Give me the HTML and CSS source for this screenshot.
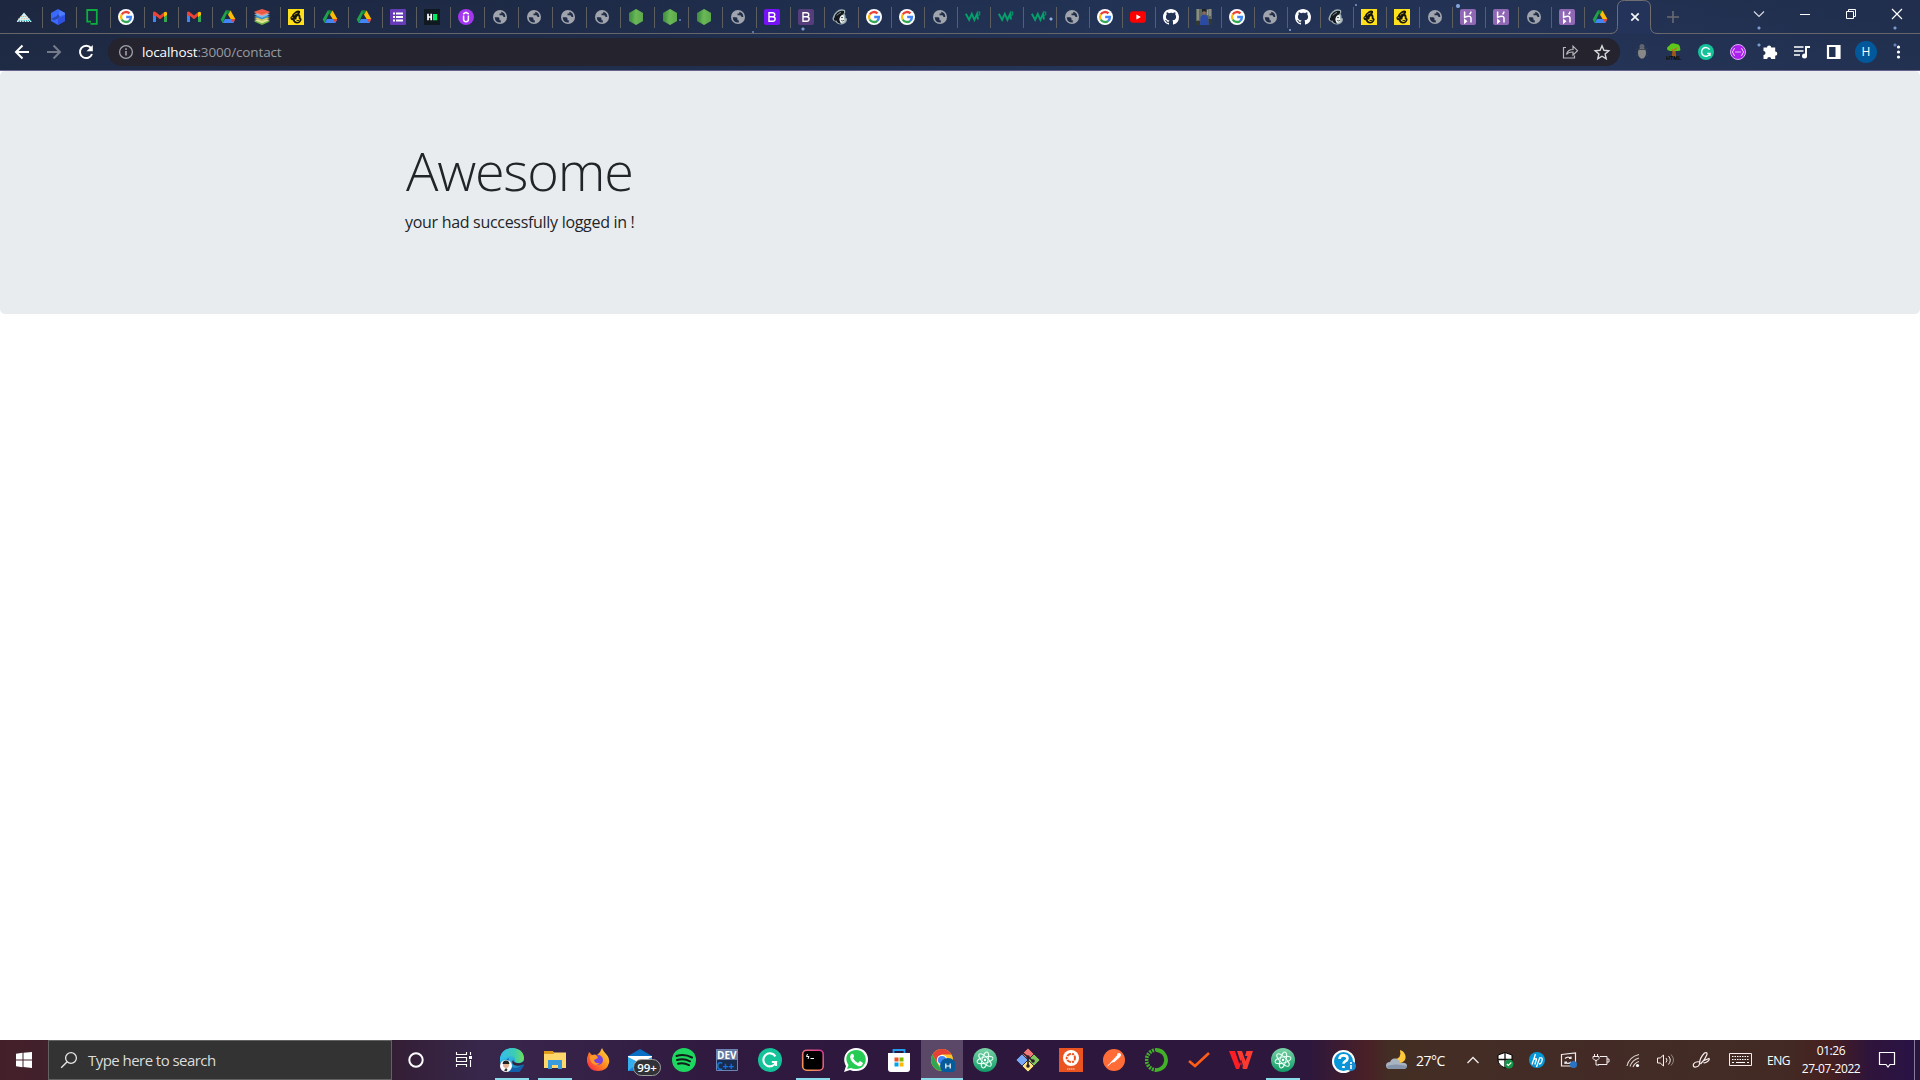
FILE: index.html
```html
<!DOCTYPE html>
<html lang="en">
<head>
<meta charset="utf-8">
<title>localhost:3000/contact</title>
<link rel="stylesheet" href="styles.css">
</head>
<body>
<svg class="defs" aria-hidden="true">
<defs>
<linearGradient id="edgeG" x1="0" y1="0" x2="1" y2="1"><stop offset="0" stop-color="#36c6f5"/><stop offset=".5" stop-color="#2fb0d8"/><stop offset="1" stop-color="#0c59a4"/></linearGradient>
<linearGradient id="edgeT" x1="0" y1="0" x2="1" y2="0"><stop offset="0" stop-color="#35bdf0"/><stop offset=".6" stop-color="#3ccbb4"/><stop offset="1" stop-color="#6ee05a"/></linearGradient>
<linearGradient id="foxG" x1="1" y1="0" x2="0" y2="1"><stop offset="0" stop-color="#ffe043"/><stop offset=".5" stop-color="#ff8a1e"/><stop offset="1" stop-color="#f5174f"/></linearGradient>
<linearGradient id="atomG" x1="0" y1="0" x2="0" y2="1"><stop offset="0" stop-color="#7bd3a6"/><stop offset="1" stop-color="#0f9b66"/></linearGradient>
<linearGradient id="nodeG" x1="0" y1="0" x2="1" y2="0"><stop offset="0" stop-color="#3f8b3f"/><stop offset=".5" stop-color="#66b856"/><stop offset="1" stop-color="#4a9a40"/></linearGradient>
<linearGradient id="hyG" x1="1" y1="0" x2="0" y2="1"><stop offset="0" stop-color="#d5369b"/><stop offset="1" stop-color="#f9a34b"/></linearGradient>
</defs>
<symbol id="peak" viewBox="0 0 16 16"><path d="M8 3.400 16 13H0z" fill="#d3f4f5"/><path d="M4.500 7.500h7" stroke="#eba766" stroke-width="1.200" stroke-dasharray="1.400 .8"/><path d="M2.500 9.700h11" stroke="#f0b988" stroke-width="1" stroke-dasharray="1.400 1.200"/><path d="M1 11.500h14" stroke="#2cbcc4" stroke-width="1.200" stroke-dasharray="1 1.200"/><path d="M0 12.600h16" stroke="#1d2943" stroke-dasharray="1 1.600"/></symbol>
<symbol id="hex" viewBox="0 0 16 16"><path d="m8 0 7 4v8l-7 4-7-4V4z" fill="#3b69fa"/><path d="M8 9.500 15 6v6l-7 4z" fill="#2f50e0"/><path d="M1 9.700 7 7V5.200L10.500 7 8 9.500 4 11.300z" fill="#2948b4"/><path d="M9.500 1.200 15 4v1L9 7.500z" fill="#4f7dff"/></symbol>
<symbol id="frame" viewBox="0 0 16 16"><path d="M7 12.700H3.200V1h9.600v2.500M6.500 14.900h6.300V3M3.200 12v1.500" fill="none" stroke="#0dad3e" stroke-width="1.800"/></symbol>
<symbol id="google" viewBox="0 0 16 16"><circle cx="8" cy="8" r="8" fill="#fff"/><g fill="none" stroke-width="2.300"><path d="M3.700 5.500A5 5 0 0 1 11.500 4.400" stroke="#ea4335"/><path d="M3.700 5.500a5 5 0 0 0 0 5" stroke="#fbbc05"/><path d="M3.700 10.500A5 5 0 0 0 11.300 11.800" stroke="#34a853"/><path d="M8.200 8H13a5 5 0 0 1-1.800 3.800" stroke="#4285f4"/></g></symbol>
<symbol id="gmail" viewBox="0 0 16 16"><path d="M1 4v9h3V7z" fill="#4285f4"/><path d="M15 4v9h-3V7z" fill="#34a853"/><path d="M1 3.600Q1.700 1.800 4 3.300L8 6.400l4-3.100V7l-4 3.200L4 7v1L1 5.800z" fill="#ea4335"/><path d="M12 3.300q2.500-1.500 3 .6v2L12 8z" fill="#fbbc04"/></symbol>
<symbol id="drive" viewBox="0 0 16 16"><path d="M5.700 1.400h2.600L4.500 10 2.500 14 .7 10.400z" fill="#1fa34a"/><path d="M5.700 1.400h4.800L8 6z" fill="#14883b"/><path d="M10.500 1.400 15.300 10h-4.700L8 5.800z" fill="#fbbc04"/><path d="M5 10h10.300l-2 4H2.600z" fill="#4285f4"/><path d="M15.300 10h-4.400l2.400 4z" fill="#ea4335"/></symbol>
<symbol id="layers" viewBox="0 0 16 16"><path d="m8 10.500 8 2L8 16l-8-3.500z" fill="#6fb545"/><path d="m8 9 8 2-8 3.300L0 11z" fill="#e4e59a"/><path d="m8 7 8 2-8 3.300L0 9z" fill="#d3c95b"/><path d="m8 5.300 8 2-8 3.200-8-3.200z" fill="#3b8fd0"/><path d="m8 3.700 8 1.800-8 3.200-8-3.200z" fill="#7cc0ea"/><path d="m8 1.800 8 1.900-8 3.200L0 3.700z" fill="#f59683"/><path d="m8 0 8 2.700-8 3-8-3z" fill="#ee5a48"/></symbol>
<symbol id="monkey" viewBox="0 0 16 16"><path d="M12 2Q10 .8 7.500 2.500 4.700 4.500 3.800 7q-2 1-1.200 3 .8 1.500 2.200 1.300Q6 14.500 9 14.500q3.600-.2 4.600-3.700.2-1.600-1-1.900.2-3-1.400-3.900Q12.500 3.800 12 2z" fill="#16150c"/><path d="M10 6.700q1.300 1 .7 3 1.500.2 1.300 1.200-1 2-3 2-2.400-.3-2.600-2.700 1.200.6 2-.3-.2-1.700 1.600-3.200z" fill="#ffe01b"/><path d="M6 6.300q1.500-2 3.600-2.300M3.700 8.500q1-.5 1.300.7" fill="none" stroke="#ffe01b" stroke-width=".7"/><path d="M8.500 11.300q1.500.7 3-.2" fill="none" stroke="#16150c" stroke-width=".9"/></symbol>
<symbol id="chimp" viewBox="0 0 16 16"><path d="M0 0h16v16H0z" fill="#ffe01b"/><use href="#monkey"/></symbol>
<symbol id="freddie" viewBox="0 0 16 16"><path d="M12.800 1Q8-.8 4.500 2.500 2 4.500 1.200 7.500q-1.500 2.200.2 4.300 1.500.9 2 .7Q5.500 16 10 15.500q4.700-1 5-5-.3-1.500-1.500-1.800.3-2.700-1-3.900Q14 3 12.800 1z" fill="#9fb0b5"/><path d="M12 2Q8.500.8 5.400 3.500 3 5.500 2.600 8.200q-1.200 1-.5 2.700.8 1.200 2.300.5Q6 14.700 9 14.700q-1.800-2.500-1.500-4.700.3-3.500 3.500-4.500 1.500-1.500 1-3.500z" fill="#14181c"/><path d="M11 5.800q1.700 1.300.9 3.900 1.600.2 1.500 1.400-1 2.800-3.900 2.900-2-1-2-3.500Q7.800 7 11 5.800z" fill="#eef2f2"/><path d="M9 8.800q1-1 2 0M9.200 11.500q1.500 1 3.400-.4" fill="none" stroke="#30363a" stroke-width=".8"/><path d="M5 6.500Q6.500 4 9 3.500" fill="none" stroke="#b9c8cb" stroke-width=".7"/></symbol>
<symbol id="forms" viewBox="0 0 16 16"><rect width="16" height="16" rx="1" fill="#673ab7"/><path d="M3 4.500h2M3 8h2M3 11.500h2M6 4.500h7M6 8h7M6 11.500h7" stroke="#fff" stroke-width="1.800"/></symbol>
<symbol id="hacker" viewBox="0 0 16 16"><path d="M0 0h16v16H0z" fill="#101820"/><path d="M4 4.800v6.400M7.200 4.800v6.400M4 8h3.200" stroke="#fff" stroke-width="1.700"/><path d="M9 5h4.200v6.300H9z" fill="#00ea64"/></symbol>
<symbol id="udemy" viewBox="0 0 16 16"><circle cx="8" cy="8" r="8" fill="#a435f0"/><path d="M5.600 6.500v3.800q0 2.400 2.400 2.400t2.400-2.400V6.500M5.200 5 8 3.300 10.800 5" fill="none" stroke="#fff" stroke-width="1.500"/></symbol>
<symbol id="globe" viewBox="0 0 16 16"><circle cx="8" cy="8" r="7" fill="#a0a4ad"/><path d="M2.700 8.300h3.500q1.300.2 1.300 1.500v1.400h1.300v2.300Q3.200 13.800 2.700 8.300zM9.300 2.800q4 .9 4 5.200h-2V7q-.5-.8-1.500-.8H7.500V4.500h1.800z" fill="#202d49"/></symbol>
<symbol id="node" viewBox="0 0 16 16"><path d="m8 0 7 4v8l-7 4-7-4V4z" fill="url(#nodeG)"/><path d="M8 0 5 12l3 4 7-4V4z" fill="#72b95b" opacity=".45"/></symbol>
<symbol id="boot" viewBox="0 0 16 16"><rect width="16" height="16" rx="2" fill="currentColor"/><path d="M5 3.700h3.500c3 0 3 3.800.2 4 3.400.2 3.200 4.500-.2 4.500H5zM5 7.700h3.700" fill="none" stroke="#fff" stroke-width="1.400"/></symbol>
<symbol id="w3" viewBox="0 0 16 16"><path d="m.8 4.800 3.300 6 2.700-6 2.600 6 2.700-6 .9 5.700" fill="none" stroke="#05a06b" stroke-width="1.900"/><path d="M12.800 3h2.400l-1.200 1.300q1.700.3.900 1.600-.9.700-2 0" fill="none" stroke="#05a06b" stroke-width=".9"/></symbol>
<symbol id="yt" viewBox="0 0 16 16"><rect y="2.300" width="16" height="11.400" rx="3" fill="#f00"/><path d="m6.400 5.400 4.500 2.600-4.500 2.600z" fill="#fff"/></symbol>
<symbol id="github" viewBox="0 0 16 16"><path fill="#fff" d="M8 0C3.580 0 0 3.580 0 8c0 3.540 2.290 6.530 5.470 7.590.4.070.55-.17.55-.38 0-.19-.01-.82-.01-1.490-2.010.37-2.530-.49-2.690-.94-.09-.23-.48-.94-.82-1.130-.28-.15-.68-.52-.01-.53.63-.01 1.080.58 1.230.82.72 1.210 1.870.87 2.330.66.070-.52.28-.87.51-1.070-1.780-.2-3.640-.89-3.640-3.950 0-.87.31-1.590.82-2.150-.08-.2-.36-1.020.08-2.120 0 0 .67-.21 2.200.82A7.400 7.400 0 0 1 8 3.870c.68 0 1.360.09 2 .26 1.530-1.040 2.200-.82 2.200-.82.44 1.100.16 1.920.08 2.120.51.56.82 1.270.82 2.150 0 3.070-1.870 3.750-3.650 3.950.29.25.54.73.54 1.480 0 1.070-.01 1.930-.01 2.200 0 .21.15.46.55.38A8.010 8.010 0 0 0 16 8c0-4.420-3.580-8-8-8z"/></symbol>
<symbol id="photo" viewBox="0 0 16 16"><path d="M0 0h16v16H0z" fill="#5e6961"/><path d="M2 0v11M14 0v7M11.800 1v5" stroke="#b7b5a5" stroke-width="1"/><path d="m4 16 .5-8L7 5.500h2.500L12 8l1 8z" fill="#2b4aa6"/><path d="M6 0h4.500v3H6z" fill="#1e2023"/><path d="M6.800 2.300h2.800v3.400H6.800z" fill="#8e6559"/><path d="M0 12h4v4H0zM12.500 10H16v6h-3z" fill="#34392f"/></symbol>
<symbol id="heroku" viewBox="0 0 16 16"><rect width="16" height="16" rx="2" fill="#8f67b5"/><path d="M4.600 2.600v5.600q6-2.300 6.400.6v4.700M11 2.600q0 1.500-1.400 2.800M4.800 11v2.600l1.500-1.300z" fill="none" stroke="#fff" stroke-width="1.500"/></symbol>
<symbol id="gram" viewBox="0 0 24 24"><circle cx="12" cy="12" r="12" fill="#15c39a"/><path d="M17.400 8.400A6.500 6.500 0 1 0 18 14h-4.200M18 18v-4.400" fill="none" stroke="#fff" stroke-width="2.100"/></symbol>
<symbol id="atom" viewBox="0 0 24 24"><circle cx="12" cy="12" r="12" fill="url(#atomG)"/><g fill="none" stroke="#e5fff3" stroke-width="1"><ellipse cx="12" cy="12" rx="3" ry="8.200" transform="rotate(15 12 12)"/><ellipse cx="12" cy="12" rx="3" ry="8.200" transform="rotate(75 12 12)"/><ellipse cx="12" cy="12" rx="3" ry="8.200" transform="rotate(135 12 12)"/></g><circle cx="12" cy="12" r="1.200" fill="#fff"/></symbol>
</svg>

<header class="browser">
<div class="tabs">
<span class="tab"><svg><use href="#peak"/></svg></span><span class="tab"><svg><use href="#hex"/></svg></span><span class="tab"><svg><use href="#frame"/></svg></span><span class="tab"><svg><use href="#google"/></svg></span><span class="tab"><svg><use href="#gmail"/></svg></span><span class="tab"><svg><use href="#gmail"/></svg></span><span class="tab"><svg><use href="#drive"/></svg></span><span class="tab"><svg><use href="#layers"/></svg></span><span class="tab"><svg><use href="#chimp"/></svg></span><span class="tab"><svg><use href="#drive"/></svg></span><span class="tab"><svg><use href="#drive"/></svg></span><span class="tab"><svg><use href="#forms"/></svg></span><span class="tab"><svg><use href="#hacker"/></svg></span><span class="tab"><svg><use href="#udemy"/></svg></span>
<span class="tab"><svg><use href="#globe"/></svg></span><span class="tab"><svg><use href="#globe"/></svg></span><span class="tab"><svg><use href="#globe"/></svg></span><span class="tab"><svg><use href="#globe"/></svg></span><span class="tab"><svg><use href="#node"/></svg></span><span class="tab"><svg><use href="#node"/></svg></span><span class="tab"><svg><use href="#node"/></svg></span><span class="tab"><svg><use href="#globe"/></svg></span><span class="tab"><svg class="violet"><use href="#boot"/></svg></span><span class="tab"><svg class="plum"><use href="#boot"/></svg></span><span class="tab"><svg><use href="#freddie"/></svg></span>
<span class="tab slim"><svg><use href="#google"/></svg></span><span class="tab slim"><svg><use href="#google"/></svg></span><span class="tab slim"><svg><use href="#globe"/></svg></span><span class="tab slim"><svg><use href="#w3"/></svg></span><span class="tab slim"><svg><use href="#w3"/></svg></span><span class="tab slim"><svg><use href="#w3"/></svg></span><span class="tab slim"><svg><use href="#globe"/></svg></span><span class="tab slim"><svg><use href="#google"/></svg></span><span class="tab slim"><svg><use href="#yt"/></svg></span><span class="tab slim"><svg><use href="#github"/></svg></span><span class="tab slim"><svg><use href="#photo"/></svg></span><span class="tab slim"><svg><use href="#google"/></svg></span><span class="tab slim"><svg><use href="#globe"/></svg></span><span class="tab slim"><svg><use href="#github"/></svg></span><span class="tab slim"><svg><use href="#freddie"/></svg></span><span class="tab slim"><svg><use href="#chimp"/></svg></span><span class="tab slim"><svg><use href="#chimp"/></svg></span><span class="tab slim"><svg><use href="#globe"/></svg></span><span class="tab slim"><svg><use href="#heroku"/></svg></span><span class="tab slim"><svg><use href="#heroku"/></svg></span><span class="tab slim"><svg><use href="#globe"/></svg></span><span class="tab slim"><svg><use href="#heroku"/></svg></span><span class="tab last"><svg><use href="#drive"/></svg></span>
<svg class="active" viewBox="0 0 50 34"><path d="M0 33.500q7.500 0 7.500-7V7q0-6.500 7-6.500h19q7 0 7 6.500v19.500q0 7 7 7V34H0z" fill="#23335a"/><path d="M0 33.500q7.500 0 7.500-7V7q0-6.500 7-6.500h19q7 0 7 6.500v19.500q0 7 7 7H50" fill="none" stroke="#716e70"/><path d="m21.300 13.300 7.400 7.400m0-7.400-7.400 7.400" stroke="#f2f4f8" stroke-width="1.700"/></svg>
<svg class="plus" viewBox="0 0 26 34"><path d="M13 11v12M7 17h12" stroke="#6b6b70" stroke-width="1.600"/></svg>
<div class="window">
<svg viewBox="0 0 46 34"><path d="m18 11.500 5 5 5-5" fill="none" stroke="#d7dae1" stroke-width="1.200"/></svg>
<svg viewBox="0 0 46 34"><path d="M18 14.500h10" stroke="#fff"/></svg>
<svg viewBox="0 0 46 34"><path d="M18.500 11.500h7v7h-7zM20.500 11V9.500h7v7H26" fill="none" stroke="#fff"/></svg>
<svg viewBox="0 0 46 34"><path d="m18 9 10 10m0-10L18 19" stroke="#fff" stroke-width="1.200"/></svg>
</div>
</div>
<div class="toolbar">
<svg viewBox="0 0 32 36"><path d="M23 18H10m6.500-6.500L10 18l6.500 6.500" fill="none" stroke="#fff" stroke-width="2"/></svg>
<svg viewBox="0 0 32 36"><path d="M9 18h13m-6.500-6.500L22 18l-6.500 6.500" fill="none" stroke="#747b8b" stroke-width="2"/></svg>
<svg viewBox="0 0 32 36"><path d="M21 14a6.200 6.200 0 1 0 1 6" fill="none" stroke="#fff" stroke-width="2"/><path d="M22.800 11v6.300h-6.300z" fill="#fff"/></svg>
<div class="address">
<svg class="info" viewBox="0 0 16 16"><circle cx="8" cy="8" r="6.400" fill="none" stroke="#a0a2a9" stroke-width="1.300"/><path d="M8 7v4.500M8 4.300V6" stroke="#a0a2a9" stroke-width="1.600"/></svg>
<span class="url"><b>localhost</b>:3000/contact</span>
<svg viewBox="0 0 32 28"><path d="M12 9.500H9.500v10.500h11V17.500M12.500 16.500q1-5 6.500-5V8.200l4.500 4.500-4.500 4.400V14q-4.500-.2-6.500 2.500z" fill="none" stroke="#b7b7bc" stroke-width="1.200"/></svg>
<svg viewBox="0 0 32 28"><path d="m16 7.800 1.900 4.500 4.900.4-3.700 3.200 1.100 4.800-4.200-2.500-4.200 2.500 1.100-4.800-3.700-3.200 4.900-.4z" fill="none" stroke="#d8d8dc" stroke-width="1.400"/></svg>
</div>
<div class="ext">
<svg viewBox="0 0 32 36"><path d="m10 14 12 8M9.500 18h13M10 22l12-8" stroke="#353e51"/><ellipse cx="16" cy="19" rx="4" ry="5.800" fill="#888"/><circle cx="16" cy="12.500" r="2.500" fill="#60646c"/><path d="M12.500 15.500h7" stroke="#464a53"/></svg>
<svg viewBox="0 0 32 36"><path d="M14.700 14h2.600l1 9h-4.600z" fill="#9d5818"/><path d="M9.500 16a3 3 0 0 1 1.500-4q2-4 7-2 4 0 4 4 1.500 3-2 3h-8z" fill="#5cc71a"/><path d="m16 18-2-3m2 1 3-2" stroke="#ba6d22" stroke-width="1.300"/><text x="8" y="25.500" class="html">HTML</text></svg>
<svg viewBox="0 0 32 36"><use href="#gram" x="8" y="10" width="16" height="16"/></svg>
<svg viewBox="0 0 32 36"><circle cx="16" cy="18" r="7.500" fill="#ab20ed" stroke="#e2adff"/><path d="M13 14.500q-1.500 0-1.500 1.500t-1.500 2q1.500.5 1.500 2t1.500 1.500m6-7q1.500 0 1.500 1.500t1.500 2q-1.500.5-1.500 2t-1.500 1.500M13 18h6" fill="none" stroke="#f3d5ff" stroke-width=".9"/></svg>
<svg viewBox="0 0 32 36"><path d="M9.500 13.500H13a2.100 2.100 0 1 1 4.200 0h4v4.100a2.100 2.100 0 1 1 0 4.200V25h-4a2 2 0 1 0-4 0H9.500v-4a2 2 0 1 0 0-4z" fill="#fff"/></svg>
<svg viewBox="0 0 32 36"><path d="M8 13h9.500M8 17h9.500M8 21h6" stroke="#fff" stroke-width="1.600"/><path d="M20 22v-9h4" fill="none" stroke="#fff" stroke-width="2"/><circle cx="18.500" cy="22" r="2.500" fill="#fff"/></svg>
<svg viewBox="0 0 32 36"><path d="M10 12h11.500v12H10z" fill="none" stroke="#fff" stroke-width="2.200"/><path d="M17.500 11H22v14h-4.500z" fill="#fff"/></svg>
<span class="avatar">H</span>
<svg viewBox="0 0 32 36"><g fill="#fff"><circle cx="16.500" cy="13" r="1.600"/><circle cx="16.500" cy="18" r="1.600"/><circle cx="16.500" cy="23" r="1.600"/></g></svg>
</div>
</div>
</header>

<main class="page">
<section class="jumbotron"><div class="container"><h1>Awesome</h1><p>your had successfully logged in !</p></div></section>
</main>

<footer class="taskbar">
<svg class="start" viewBox="0 0 48 40"><path d="m16 13.700 6.500-.9v6.700H16zm7.500-1L32 12v7.500h-8.500zM16 20.500h6.500v6.700l-6.500-.9zm7.500 0H32V28l-8.500-.9z" fill="#fff"/></svg>
<div class="search"><svg viewBox="0 0 18 18"><circle cx="11" cy="7" r="5.400" fill="none" stroke="#e6e6e6" stroke-width="1.300"/><path d="m7.200 10.800-6 6" stroke="#e6e6e6" stroke-width="1.400"/></svg><span>Type here to search</span></div>
<svg class="start" viewBox="0 0 48 40"><circle cx="24" cy="20" r="6.700" fill="none" stroke="#fff" stroke-width="2"/></svg>
<svg class="start" viewBox="0 0 48 40"><path d="M16.500 12v2.500h10V12M16.500 27v-2.500h10V27M16.500 17.500h10v4h-10zM30.500 12v3M30.500 20v7" fill="none" stroke="#fff" stroke-width="1.100"/><path d="M29 16h3v3h-3z" fill="#fff"/></svg>
<div class="apps">
<span class="app open"><svg viewBox="0 0 24 24"><circle cx="12" cy="12" r="12" fill="url(#edgeG)"/><path d="M0 11C1-4 24-3 24 10c0 5-6 6-9 4 1-5-3-7-8-5Q2 10 0 13z" fill="url(#edgeT)"/><path d="M9 10q-2 6 3 9 6 3 11-3l1.500 1L18 26 8 24Q2 13 9 10z" fill="#1260ab"/><path d="M13 12q-2 3 1 5 5 2 10-1v-3q-4 4-10 1z" fill="#35203f"/><circle cx="6" cy="18" r="6" fill="#fff"/><circle cx="6" cy="17" r="3" fill="#e3b193"/><path d="M2.600 16q0-3.500 3.400-3.500T9.400 16z" fill="#222"/><path d="M4 22.500 6 20l1.500 1.500-1 2z" fill="#333"/></svg></span>
<span class="app open"><svg viewBox="0 0 24 24"><path d="M1 3h8l2 1.500h12V20H1z" fill="#ffd76a"/><path d="M1 3h9l1 3H1z" fill="#df9b19"/><path d="M5 21v-9h14v9h-4v-4H9v4z" fill="#389bdd"/></svg></span>
<span class="app"><svg viewBox="0 0 24 24"><path d="m1 10 2-6 3 3q3-1 5 0l3-3 2-4q1 3 4 6 4 4 3 9-2 8-11 8T1 14z" fill="url(#foxG)"/><circle cx="12" cy="12" r="5" fill="#7542dc"/><path d="M4 8q4-2 7 0 2 2-1 3l-2 1q1 4 6 3-4 4-8 0-3-4-2-7z" fill="#ff9829"/></svg></span>
<span class="app mail"><svg viewBox="0 0 24 24"><path d="m0 8 12-7 12 7v15H0z" fill="#0870c5"/><path d="M0 8h24v8H0z" fill="#fff"/><path d="m0 9 12 6 12-6v14H0z" fill="#35aef0"/><path d="m0 23 12-9v9z" fill="#1580d2"/></svg><i>99+</i></span>
<span class="app"><svg viewBox="0 0 24 24"><circle cx="12" cy="12" r="12" fill="#1ed760"/><path d="M4.500 8q8-2.400 15.500 1.500M5 12q7-2 13 1.300M6 15.800q5.500-1.500 11 1.300" fill="none" stroke="#111d17" stroke-width="2" stroke-linecap="round"/></svg></span>
<span class="app"><svg viewBox="0 0 24 24"><path d="M1 1h22v22H1z" fill="#192b4c"/><path d="M1 1h22v11H1z" fill="#65779f"/><path d="M1.500 1.500h21v21h-21z" fill="none" stroke="#6b83b5"/><text x="2" y="11" class="dev">DEV</text><text x="1.500" y="22" class="dev cpp">C++</text></svg></span>
<span class="app"><svg viewBox="0 0 24 24"><use href="#gram"/></svg></span>
<span class="app open"><svg viewBox="0 0 24 24"><rect x="1.700" y="2.200" width="20.500" height="20" rx="4" fill="#000" stroke="url(#hyG)" stroke-width="1.600"/><path d="m6.500 6-1 2.500h2.500l-1 2.500M9.500 10.500h3.500" fill="none" stroke="#fff" stroke-width="1"/></svg></span>
<span class="app"><svg viewBox="0 0 24 24"><path d="m0 24 2-6C-3 10 3 0 12 0c16 0 16 23 0 23-2 0-4 0-6-1z" fill="#fff"/><path d="m3 21 1.500-4C-1 9 5 2 12 2c13 0 13 19 0 19q-3 0-5-1z" fill="#25cb53"/><path d="M7 6q3-1 3 3l-1 1q2 4 5 5l2-2 3 2q-1 4-5 3Q7 15 6 9z" fill="#fff"/></svg></span>
<span class="app"><svg viewBox="0 0 24 24"><path d="M6.500 5V2h11v3" fill="none" stroke="#219cf0" stroke-width="1.800"/><path d="M1 5h22v16q0 3-3 3H4q-3 0-3-3z" fill="#fff"/><path d="M7.500 9.500h4v4h-4z" fill="#f25022"/><path d="M12.500 9.500h4v4h-4z" fill="#7fba00"/><path d="M7.500 14.500h4v4h-4z" fill="#00a4ef"/><path d="M12.500 14.500h4v4h-4z" fill="#ffb900"/></svg></span>
<span class="app open current"><svg viewBox="0 0 24 24"><circle cx="11" cy="12" r="11" fill="#fbc52b"/><path d="M1.500 6.500A11 11 0 0 1 20.500 6.500H11L6.200 15z" fill="#e64135"/><path d="M1.500 6.500 6.200 15 11 23A11 11 0 0 1 1.500 6.500z" fill="#2fa652"/><circle cx="11" cy="12" r="5.200" fill="#fff"/><circle cx="11" cy="12" r="4.100" fill="#4285f4"/><circle cx="17" cy="18" r="8" fill="#075b9a"/><path d="M14.800 15.500v5m4.400-5v5m-4.400-2.500h4.400" stroke="#fff" stroke-width="1.200"/></svg></span>
<span class="app"><svg viewBox="0 0 24 24"><use href="#atom"/></svg></span>
<span class="app"><svg viewBox="0 0 24 24"><g stroke="#21152e" stroke-width=".7"><path d="m12 0 6 6-6 6-6-6z" fill="#f17676"/><path d="m18 6 6 6-6 6-6-6z" fill="#83c65b"/><path d="m12 12 6 6-6 6-6-6z" fill="#ffe180"/><path d="m6 6 6 6-6 6-6-6z" fill="#79a8f7"/></g><path d="m7 5 10 8m-5-4v9" stroke="#29202b" stroke-width="1.600"/><g fill="#29202b"><circle cx="12" cy="9" r="1.800"/><circle cx="17" cy="13" r="1.800"/><circle cx="12" cy="18" r="1.800"/></g></svg></span>
<span class="app"><svg viewBox="0 0 24 24"><path d="M0 0h24v24H0z" fill="#e95420"/><circle cx="12" cy="10" r="8" fill="#fff"/><circle cx="12" cy="10" r="4" fill="none" stroke="#e95420" stroke-width="2"/><g fill="#e95420" stroke="#fff"><circle cx="7.700" cy="10" r="1.700"/><circle cx="14" cy="6.200" r="1.700"/><circle cx="14" cy="13.800" r="1.700"/></g><path d="M8 21h8" stroke="#ffd6c6" stroke-dasharray="1.500 .5"/></svg></span>
<span class="app"><svg viewBox="0 0 24 24"><circle cx="12" cy="12" r="11" fill="#ff6c37"/><path d="m8 15 6-6.500 3-2.500 1.500 1-1 2.500-5 4.500z" fill="#fff"/><path d="m5.500 18 9-8" stroke="#fff"/><circle cx="17" cy="7" r="2" fill="#fff"/></svg></span>
<span class="app"><svg viewBox="0 0 24 24"><path d="M12 2a10 10 0 1 1-2 20" fill="none" stroke="#43b02a" stroke-width="3.800"/><path d="M12 2a10 10 0 0 0-1 20" fill="none" stroke="#43b02a" stroke-width="3.800" stroke-dasharray="2 1"/><path d="M11 3.500a8.500 8.500 0 0 0-1 16" fill="none" stroke="#2c173c" stroke-dasharray="1 1.600"/></svg></span>
<span class="app narrow"><svg viewBox="0 0 24 24"><path d="m2 13 6 5L22 5" fill="none" stroke="#ff5c16" stroke-width="2.600"/></svg></span>
<span class="app narrow"><svg viewBox="0 0 24 24"><path d="M0 3h6l4.500 13.500L9 21H7z" fill="#fc1d25"/><path d="M8 3h5l3.500 10L18.500 8H16l1.500-5H24l-6 18h-4z" fill="#fd3a30"/><path d="M14.500 8 10 21H7z" fill="#fc1d25"/><path d="m11 15.500 1-3 2 6.500" fill="none" stroke="#2d173c" stroke-width=".8"/></svg></span>
<span class="app narrow open"><svg viewBox="0 0 24 24"><use href="#atom"/></svg></span>
</div>
<svg class="help" viewBox="0 0 24 24"><circle cx="11.500" cy="12.500" r="10.500" fill="#0796d7" stroke="#fff" stroke-width="2"/><path d="M7.500 10q.2-3.600 4-3.600 4 0 4 3 0 1.500-2 2.700t-2 2.600M11.500 17v2" fill="none" stroke="#fff" stroke-width="2.600"/><circle cx="19" cy="17" r="5" fill="#168ed1"/><path d="M19 13v2m0 1v4" stroke="#fff" stroke-width="1.600"/></svg>
<svg class="cloud" viewBox="0 0 22 22"><path d="M14 1c7 2 8 12 0 13q-5 0-6-4 8 0 6-9z" fill="#ffc83d"/><path d="M4 20q-4 0-4-3.500Q0 13 4 13q2-5 7-3 3 1 3 4 7-1 7 3 0 3-4 3z" fill="#a9b4c3"/><path d="M1 17q8-3 20 0-1 3-4 3H4q-2 0-3-3z" fill="#8594a9"/></svg>
<span class="temp">27°C</span>
<div class="tray">
<svg viewBox="0 0 32 40"><path d="m10.500 23 5.500-5.500 5.500 5.500" fill="none" stroke="#f3eded" stroke-width="1.300"/></svg>
<svg viewBox="0 0 32 40"><path d="m16 12.500 7 2.500v5q0 5-7 8-7-3-7-8v-5z" fill="#fff" stroke="#000"/><path d="M16 12v16M9 19.500h14" stroke="#111" stroke-width="1.300"/><circle cx="20" cy="24" r="4.500" fill="#149447"/><path d="m17.800 24 1.500 1.500 3-3" fill="none" stroke="#fff" stroke-width="1.100"/></svg>
<svg viewBox="0 0 32 40"><circle cx="16" cy="20" r="8" fill="#0796d6"/><path d="m14.500 14-3.500 10.500m2-5q3-2 2.300.5l-1.500 4.500M18.800 17.500l-3.300 9.500M18.500 17.800h2q1.500.2 0 4.400-.7 1.800-2.500 1.800" fill="none" stroke="#fff" stroke-width="1.300"/></svg>
<svg viewBox="0 0 32 40"><path d="m8.500 14.500 14-1.500v13H8.500zM12 18.500q3-3 6 0m0-2v2h-2M18 22q-3 3-6 0m0 2v-2h2" fill="none" stroke="#eee" stroke-width="1.200"/><circle cx="20.500" cy="24.500" r="3.500" fill="#2875c5"/></svg>
<svg viewBox="0 0 32 40"><path d="M15 16.500h7v8h-9M22 19h2v3h-2M8 16.500h6v2q-3 4-6 0zM9.500 14v2.500M12.500 14v2.500M11 20v5h3" fill="none" stroke="#f5eeee"/></svg>
<svg viewBox="0 0 32 40"><path d="M10 26Q12 17 22 14.500M13 26.500q2-6.500 9-8.500M16 27q1.500-4 6-5.500" fill="none" stroke="#ddd3ce" stroke-width="1.100"/><circle cx="20.500" cy="25.500" r="1.600" fill="#fff"/></svg>
<svg viewBox="0 0 32 40"><path d="M8.500 18h2.700l3.300-3v11l-3.300-3H8.500zM17 18q2 2 0 4.500M19.500 16q3.500 4 0 8.500" fill="none" stroke="#f7f0ee"/><path d="M22 14.500q5 5.500 0 11" fill="none" stroke="#9b8581"/></svg>
<svg class="pen" viewBox="0 0 40 40"><path d="M19 22q-5-1-6.500 2-1 3.500 2.500 3 3-.5 3.500-3 0-6 5-11 3-1 2.500 1.500-2 5.500-6.500 9.500M22 21l6-2.500q1 1-1.500 3-2.500 2-4 1" fill="none" stroke="#f8eeee" stroke-width="1.200"/></svg>
<svg class="keys" viewBox="0 0 38 40"><path d="M8.500 13.500h22v12h-22z" fill="none" stroke="#f6eeee"/><path d="M11 16.500h17M11 19.500h17" stroke="#fff" stroke-dasharray="1.500 1"/><path d="M11 22.500h2m2 0h9m2 0h2" stroke="#fff"/></svg>
<span class="lang">ENG</span>
<div class="clock"><span>01:26</span><span>27-07-2022</span></div>
<svg class="note" viewBox="0 0 46 40"><path d="M15.500 12.500h15v12H26l-2 2.500-2-2.500h-6.500z" fill="none" stroke="#fff" stroke-width="1.200"/></svg>
</div>
</footer>
</body>
</html>
```

FILE: styles.css
```css
* { box-sizing: border-box; }
body { margin: 0; height: 100vh; display: flex; flex-direction: column; overflow: hidden; background: #fff; font-family: "Open Sans", "Noto Sans", sans-serif; }
svg { display: block; flex: none; }
.defs { width: 0; height: 0; }

.browser {
  flex: none; height: 71px; border-bottom: 1px solid #68628c;
  background:
    radial-gradient(circle at 803px 29px, #7d9bd5 1px, transparent 2px),
    radial-gradient(circle at 1051px 19px, #8fb0e2 1px, transparent 2px),
    radial-gradient(circle at 1458px 6px, #7fa3dc 1.500px, transparent 2.500px),
    radial-gradient(circle at 1759px 28px, #7b9ad0 1px, transparent 2px),
    radial-gradient(circle at 1895px 28px, #7b9ad0 1px, transparent 2px),
    radial-gradient(circle at 1759px 45px, #7b9ad0 1px, transparent 2px),
    radial-gradient(circle at 1895px 45px, #6582bb 1px, transparent 2px),
    radial-gradient(circle at 1290px 30px, #7290c4 .8px, transparent 1.500px),
    radial-gradient(circle at 1356px 5px, #6581b3 .8px, transparent 1.500px),
    radial-gradient(circle at 680px 20px, #5371a5 .8px, transparent 1.500px),
    radial-gradient(circle at 753px 32px, #5a75a5 .8px, transparent 1.500px),
    linear-gradient(#14203a22, #26386022),
    linear-gradient(90deg, #1e2840, #1f2c49 30%, #243558 58%, #253558 75%, #22304f);
}
.tabs { height: 34px; display: flex; padding-left: 9px; background: linear-gradient(#66666a, #66666a) 0 33px / 100% 1px no-repeat; }
.tab { flex: none; width: 34px; height: 34px; padding: 9px 0 0 7px; background: linear-gradient(#5e5e5f, #5e5e5f) 100% 7px / 1px 21px no-repeat; }
.tab svg { width: 16px; height: 16px; }
.tab.slim { width: 33px; }
.tab.last { width: 25px; background: none; }
.violet { color: #7612f7; }
.plum { color: #563d7c; }
.tabs .active { width: 50px; height: 34px; }
.plus { width: 26px; height: 34px; }
.window { margin-left: auto; display: flex; }
.window svg { width: 46px; height: 34px; }

.toolbar { height: 36px; display: flex; align-items: center; padding-left: 6px; }
.toolbar svg { width: 32px; height: 36px; }
.address { width: 1512px; height: 28px; margin-left: 6px; border-radius: 14px; background: #24232e; display: flex; align-items: center; padding-left: 10px; padding-right: 2px; }
.address svg { height: 28px; }
.address .info { width: 16px; height: 16px; }
.url { flex: 1; margin-left: 8px; color: #989aa1; font-size: 13.500px; letter-spacing: -.13px; line-height: 28px; }
.url b { font-weight: 400; color: #fff; }
.ext { display: flex; align-items: center; margin-left: 6px; }
.html { font: 700 5.500px "Liberation Sans", sans-serif; fill: #080a0d; }
.avatar { width: 22px; height: 22px; margin: 0 5px; border-radius: 50%; background: #02589b; color: #fff; font-size: 12px; line-height: 22px; text-align: center; }

.page { flex: 1; }
.jumbotron { height: 243px; padding: 64px 0; border-radius: 5px; background: #e9ecef; }
.container { width: 1110px; margin: 0 auto; color: #212529; }
h1 { margin: 0 0 6px; padding: 2px 0 0 1px; font-size: 54px; line-height: 67px; font-weight: 300; letter-spacing: -1.250px; }
p { margin: 0; font-size: 16px; line-height: 24px; letter-spacing: -.3px; }

.taskbar {
  flex: none; height: 40px; display: flex; align-items: center; color: #fff; border-right: 5px solid #29163f;
  background: linear-gradient(#8a7b99, #8a7b99) 100% 0 / 1px 40px no-repeat, linear-gradient(90deg, #432029 0, #42202c 48px, #341e35 392px, #38274b 480px, #38244a 530px, #301a40 700px, #2d173c 960px, #2d173c 1310px, #4a2027 1368px, #432e24 1390px, #432d25 1480px, #432a26 1600px, #422c25 1720px, #432923 1790px, #46201f 1830px, #2f143a 1868px, #291345 1914px);
}
.start { width: 48px; height: 40px; }
.search { width: 344px; height: 40px; display: flex; align-items: center; gap: 10px; padding-left: 11px; border: 1px solid #626262; background: #333; color: #dcdcdc; font-size: 15px; letter-spacing: -.55px; }
.search svg { width: 18px; height: 18px; }
.apps { display: flex; margin-left: 2px; }
.app { width: 43px; height: 40px; display: flex; align-items: center; justify-content: center; position: relative; }
.app svg { width: 24px; height: 24px; }
.app.narrow { width: 42px; }
.open { background: linear-gradient(#8bdcea, #8bdcea) 50% 38px / 34px 2px no-repeat; }
.current { padding-left: 2px; background: linear-gradient(#8bdcea, #8bdcea) 1px 38px / 42px 2px no-repeat, linear-gradient(#5b4868, #5b4868) 1px 0 / 42px 40px no-repeat; }
.mail { padding-right: 1px; }
.mail i { position: absolute; left: 14px; top: 19px; width: 28px; height: 17px; border: 1px solid #a0a0a0; border-radius: 9px; background: #303238; font-style: normal; font-weight: 600; font-size: 11.500px; line-height: 15px; text-align: center; }
.dev { font: 700 10px "Open Sans", sans-serif; fill: #fff; }
.cpp { fill: #1475dc; }
.help { width: 24px; height: 24px; margin: 2px 30px 0 28px; }
.cloud { width: 22px; height: 22px; }
.temp { margin-left: 8px; width: 41px; font-size: 14px; letter-spacing: -.5px; }
.tray { display: flex; align-items: center; margin-left: auto; width: 458px; }
.tray svg { width: 32px; height: 40px; }
.tray .pen { width: 40px; }
.tray .keys { width: 38px; }
.lang { width: 39px; text-align: center; font-size: 12px; letter-spacing: -.5px; }
.clock { width: 66px; display: flex; flex-direction: column; align-items: center; font-size: 12px; letter-spacing: -.4px; line-height: 18px; }
.tray .note { width: 46px; }
```
